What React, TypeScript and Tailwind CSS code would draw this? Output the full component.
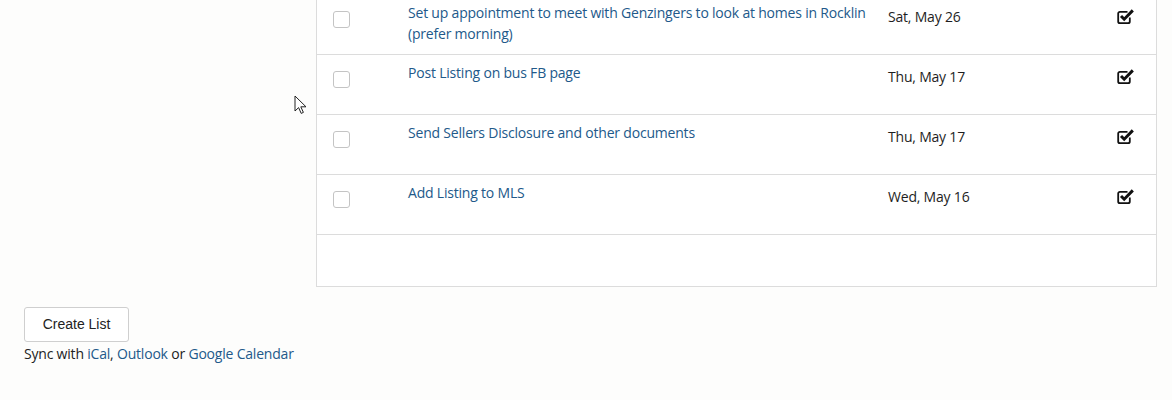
import React from 'react';

const tasks = [
  { title: 'Set up appointment to meet with Genzingers to look at homes in Rocklin (prefer morning)', due: 'Sat, May 26' },
  { title: 'Post Listing on bus FB page', due: 'Thu, May 17' },
  { title: 'Send Sellers Disclosure and other documents', due: 'Thu, May 17' },
  { title: 'Add Listing to MLS', due: 'Wed, May 16' },
];

const CheckSquare: React.FC = () => (
  <svg width="18" height="17" viewBox="0 0 18 17" fill="none">
    <path d="M12.8 9.5V13.5a1.7 1.7 0 0 1-1.7 1.7H2.9a1.7 1.7 0 0 1-1.7-1.7V5.5A1.7 1.7 0 0 1 2.9 3.8h7.6" stroke="#111" strokeWidth="1.8" />
    <path d="M4 8l3.2 3.2L15.8 2.4" stroke="#111" strokeWidth="3" strokeLinejoin="miter" />
  </svg>
);

const Cursor: React.FC = () => (
  <svg width="14" height="20" viewBox="0 0 14 20" className="absolute left-[294px] top-[95px]">
    <path d="M1 1v15l3.6-3.4 2.6 5.8 2.2-1-2.6-5.6H12z" fill="#fff" stroke="#222" strokeWidth="1" strokeLinejoin="round" />
  </svg>
);

export default function App() {
  return (
    <div className="relative w-[1172px] h-[400px] overflow-hidden bg-[#fdfdfc]" style={{ fontFamily: '"Open Sans", "Noto Sans", sans-serif' }}>
      <Cursor />
      <div className="flex">
        <div className="w-[316px] shrink-0" />
        {/* Task list panel */}
        <div className="w-[841px] -mt-[5px] bg-white border border-[#dcdcdc] border-t-0 pb-[51px]">
          {tasks.map((t) => (
            <div key={t.due + t.title} className="flex h-[60px] border-b border-[#dcdcdc]">
              <div className="w-[91px] shrink-0 pl-[16px] pt-[16px]">
                <div className="w-[17px] h-[17px] rounded-[3px] border border-[#c4c4c4] bg-white" />
              </div>
              <div className="w-[480px] shrink-0 pt-[7px] pr-[10px] text-[14px] leading-[21px] text-[#22598a] tracking-[-0.2px]">
                {t.title}
              </div>
              <div className="w-[229px] shrink-0 pt-[12px] text-[14px] leading-[20px] text-[#1e1e1e] tracking-[-0.2px]">
                {t.due}
              </div>
              <div className="pt-[13px]">
                <CheckSquare />
              </div>
            </div>
          ))}
        </div>
      </div>

      <div className="px-[24px] pt-[20px]">
        <button className="h-[35px] w-[105px] rounded-[3px] border border-[#cfcfcf] bg-white text-[14px] text-[#222]" style={{ fontFamily: '"Liberation Sans", Arial, sans-serif' }}>
          Create List
        </button>
        <div className="mt-[2px] text-[14px] leading-[20px] text-[#222] tracking-[-0.2px]">
          Sync with <a className="text-[#22598a]">iCal</a>, <a className="text-[#22598a]">Outlook</a> or <a className="text-[#22598a]">Google Calendar</a>
        </div>
      </div>
    </div>
  );
}
